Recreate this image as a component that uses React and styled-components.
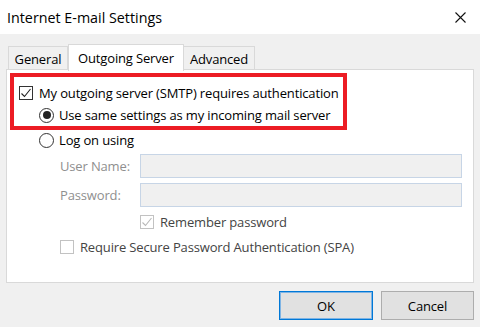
import styled, { createGlobalStyle } from "styled-components"

const Global = createGlobalStyle`
  html, body { margin: 0; padding: 0; }
  body {
    font-family: "Open Sans", "Noto Sans", "Liberation Sans", sans-serif;
    font-size: 13px;
    letter-spacing: -0.15px;
    color: #000;
  }
  * { box-sizing: border-box; }
`;

const Window = styled.div`
  width: 480px;
  height: 327px;
  background: #f0f0f0;
  display: flex;
  flex-direction: column;
  overflow: hidden;
`;

const TitleBar = styled.div`
  height: 34px;
  background: #fff;
  display: flex;
  align-items: center;
  justify-content: space-between;
  padding: 0 14px 0 7px;
  font-size: 14.3px;
  letter-spacing: 0;
  color: #000;
`;

const Body = styled.div`
  padding: 9px 6px 0 6px;
  display: flex;
  flex-direction: column;
`;

const TabStrip = styled.div`
  display: flex;
  align-items: flex-end;
  height: 27px;
  padding-left: 2px;
  position: relative;
  z-index: 1;
`;

const Tab = styled.div`
  height: ${p => (p.$active ? "27px" : "24px")};
  width: ${p => p.$w}px;
  display: flex;
  align-items: center;
  justify-content: center;
  background: ${p => (p.$active ? "#fff" : "#f0f0f0")};
  border: 1px solid #d9d9d9;
  border-bottom: ${p => (p.$active ? "none" : "1px solid #d9d9d9")};
  border-left: ${p => (p.$first || p.$active ? "1px solid #d9d9d9" : "none")};
  margin-bottom: ${p => (p.$active ? "-1px" : "0")};
  padding-top: ${p => (p.$active ? "0" : "2px")};
`;

const Panel = styled.div`
  height: 214px;
  margin-top: -1px;
  background: #fff;
  border: 1px solid #d9d9d9;
  padding: 3px 0 0 0;
  display: flex;
  flex-direction: column;
`;

const Highlight = styled.div`
  width: 337px;
  height: 57px;
  margin-left: 3px;
  border: 4px solid #ec1c24;
  padding: 4px 0 0 5px;
  display: flex;
  flex-direction: column;
`;

const Row = styled.div`
  height: ${p => p.$h || 20}px;
  display: flex;
  align-items: center;
  gap: ${p => p.$gap || 5}px;
  padding-left: ${p => p.$indent || 0}px;
  margin-top: ${p => p.$top || 0}px;
  color: ${p => p.$color || "#000"};
  white-space: nowrap;
`;

const Box = styled.span`
  width: 14px;
  height: 14px;
  flex: none;
  border: 1px solid ${p => (p.$disabled ? "#c2c2c2" : "#333")};
  background: #fff;
  display: flex;
  align-items: center;
  justify-content: center;
`;

const Radio = styled.span`
  width: 15px;
  height: 15px;
  flex: none;
  border-radius: 50%;
  border: 1px solid #333;
  background: #fff;
  display: flex;
  align-items: center;
  justify-content: center;
  &::after {
    content: "";
    width: 8px;
    height: 8px;
    border-radius: 50%;
    background: ${p => (p.$checked ? "#222" : "transparent")};
  }
`;

const Fields = styled.div`
  display: grid;
  grid-template-columns: 80px 322px;
  row-gap: 5px;
  padding-left: 53px;
  margin-top: 4px;
`;

const Label = styled.span`
  color: #8f8f8f;
  display: flex;
  align-items: center;
  height: 24px;
`;

const Input = styled.div`
  height: 24px;
  background: #f0f0f0;
  border: 1px solid #c7d5e6;
`;

const Footer = styled.div`
  display: flex;
  justify-content: flex-end;
  gap: 8px;
  padding-top: 8px;
`;

const Button = styled.div`
  width: ${p => p.$w}px;
  height: 29px;
  background: #e1e1e1;
  border: ${p => (p.$default ? "1px solid #0078d7" : "1px solid #adadad")};
  box-shadow: ${p => (p.$default ? "inset 0 0 0 1px #7fb4e4" : "none")};
  display: flex;
  align-items: center;
  justify-content: center;
`;

function Check({ disabled }) {
  return (
    <svg width="12" height="12" viewBox="0 0 12 12">
      <polyline points="1.5,6.5 4.5,9.5 10.5,2" fill="none"
        stroke={disabled ? "#b8b8b8" : "#222"} strokeWidth="1.1" />
    </svg>
  );
}

function CheckBox({ checked, disabled }) {
  return <Box $disabled={disabled}>{checked && <Check disabled={disabled} />}</Box>;
}

export default function App() {
  return (
    <>
      <Global />
      <Window>
        <TitleBar>
          <span>Internet E-mail Settings</span>
          <svg width="11" height="11" viewBox="0 0 11 11">
            <path d="M0.5 0.5 L10.5 10.5 M10.5 0.5 L0.5 10.5" stroke="#111" strokeWidth="1.1" />
          </svg>
        </TitleBar>
        <Body>
          <TabStrip>
            <Tab $first $w={60}>General</Tab>
            <Tab $active $w={116}>Outgoing Server</Tab>
            <Tab $w={71}>Advanced</Tab>
          </TabStrip>
          <Panel>
            <Highlight>
              <Row $h={23} $gap={6}>
                <CheckBox checked />
                My outgoing server (SMTP) requires authentication
              </Row>
              <Row $h={22} $indent={20} $gap={5}>
                <Radio $checked />
                Use same settings as my incoming mail server
              </Row>
            </Highlight>
            <Row $indent={32} $gap={5}>
              <Radio />
              Log on using
            </Row>
            <Fields>
              <Label>User Name:</Label>
              <Input />
              <Label>Password:</Label>
              <Input />
            </Fields>
            <Row $indent={133} $top={5} $color="#444" $gap={6}>
              <CheckBox checked disabled />
              Remember password
            </Row>
            <Row $indent={53} $top={5} $color="#444" $gap={6}>
              <CheckBox disabled />
              Require Secure Password Authentication (SPA)
            </Row>
          </Panel>
          <Footer>
            <Button $default $w={94}>OK</Button>
            <Button $w={93}>Cancel</Button>
          </Footer>
        </Body>
      </Window>
    </>
  );
}
